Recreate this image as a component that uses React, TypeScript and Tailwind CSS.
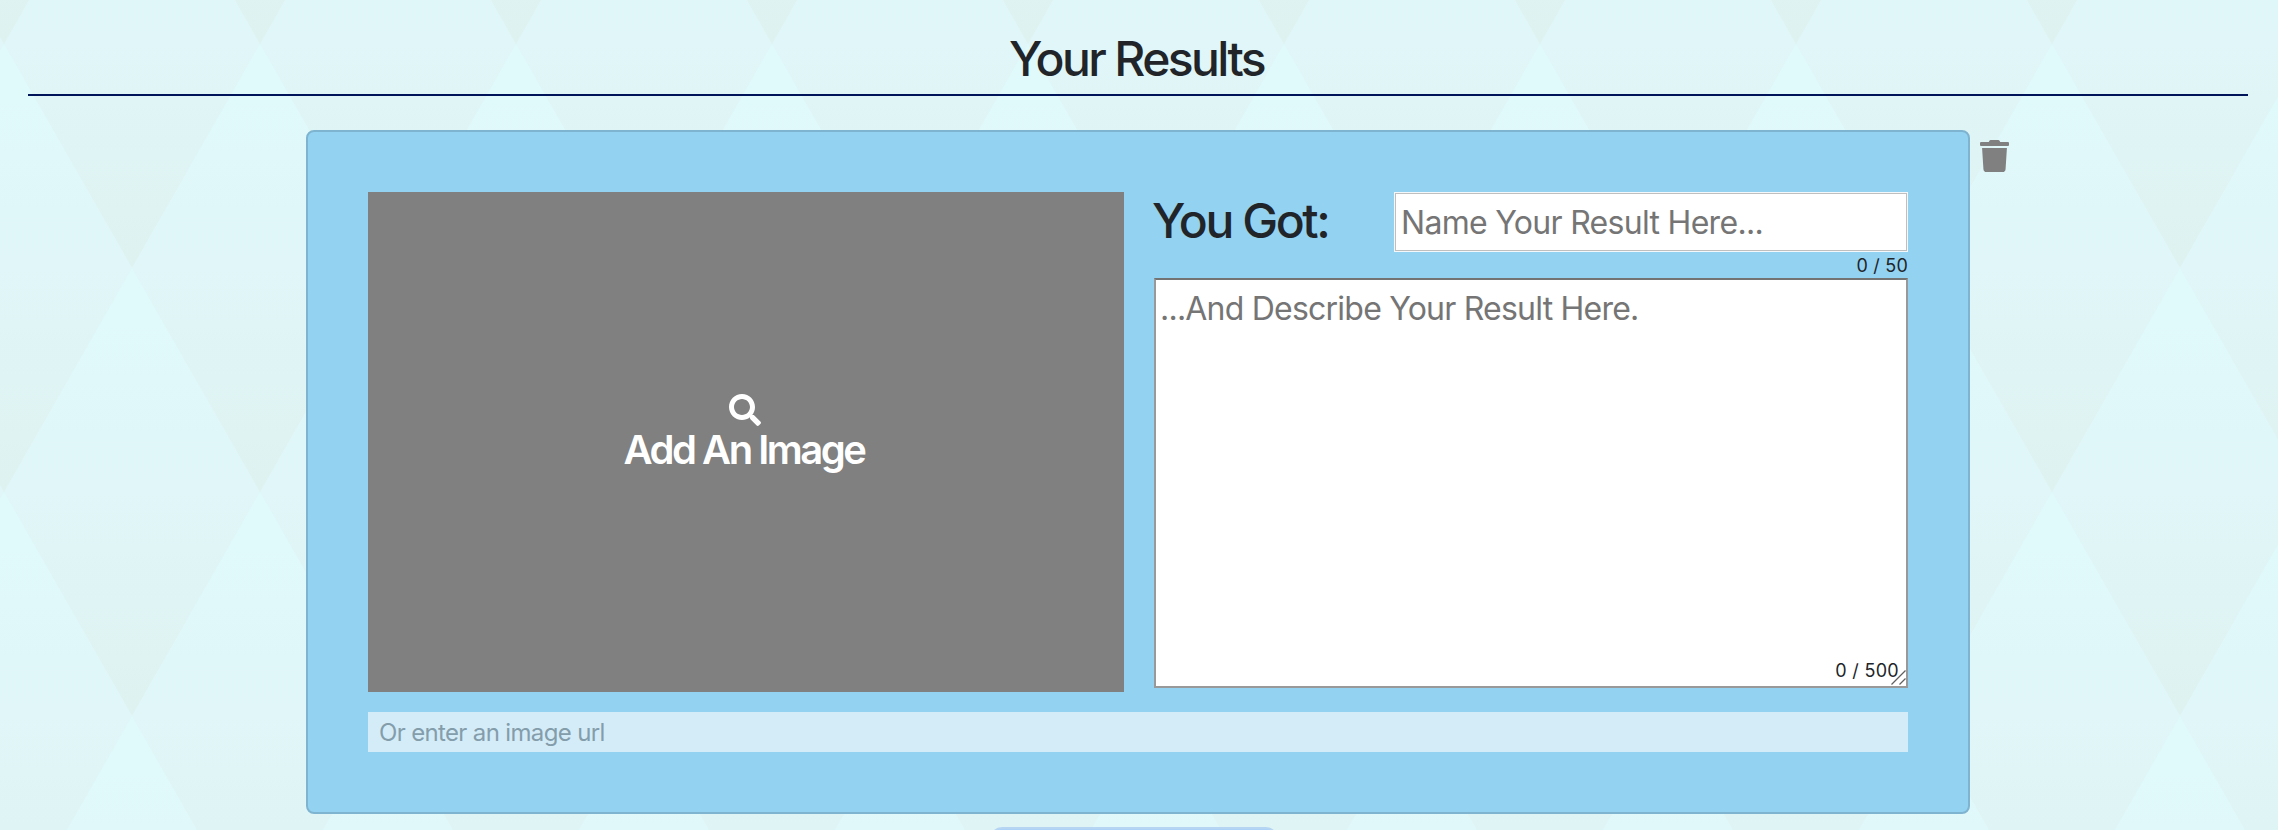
import { FaSearch, FaTrash } from "react-icons/fa";

function Backdrop() {
  return (
    <svg className="absolute inset-0 h-full w-full" aria-hidden="true">
      <defs>
        <linearGradient id="shade" x1="0" y1="0" x2="0" y2="1">
          <stop offset="0" stopColor="#e0fafc" />
          <stop offset="0.5" stopColor="#e0f6f8" />
          <stop offset="1" stopColor="#def2f0" />
        </linearGradient>
        <pattern id="diamonds" x="4" y="44" width="256" height="448" patternUnits="userSpaceOnUse">
          <rect width="256" height="448" fill="#e0f6f8" />
          <path d="M128 -224L256 0L128 224L0 0Z" fill="url(#shade)" />
          <path d="M128 224L256 448L128 672L0 448Z" fill="url(#shade)" />
          <path d="M0 0L128 224L0 448L-128 224Z" fill="url(#shade)" />
          <path d="M256 0L384 224L256 448L128 224Z" fill="url(#shade)" />
        </pattern>
      </defs>
      <rect width="100%" height="100%" fill="url(#diamonds)" />
    </svg>
  );
}

export default function App() {
  return (
    <div className="relative h-[830px] w-full overflow-hidden bg-[#e0f6f8] font-[Inter,sans-serif] text-[#212529]">
      <Backdrop />
      <main className="relative pr-[30px] pl-7">
        <header className="flex h-24 items-start justify-center border-b-2 border-[#00145a] pt-[30px]">
          <h1 className="pr-[3px] text-[48px] leading-[58px] font-medium tracking-[-2.6px] whitespace-nowrap">Your Results</h1>
        </header>

        <div className="mt-[34px] ml-[278px] flex items-start">
          <section className="h-[684px] w-[1664px] shrink-0 rounded-lg border-2 border-[#7fb4d0] bg-[#93d2f1] p-[60px]">
            <div className="flex gap-[30px]">
              <button className="flex h-[500px] w-[756px] flex-col items-center bg-[#808080] pt-[202px] pr-[2px] text-white">
                <FaSearch className="size-8" />
                <span className="pr-[2px] text-[40px] leading-[48px] font-semibold tracking-[-2.5px] whitespace-nowrap">Add An Image</span>
              </button>
              <div className="flex w-[754px] flex-col">
                <div className="flex h-[60px] justify-between">
                  <h2 className="-ml-0.5 text-[48px] leading-[58px] font-medium tracking-[-2.4px] whitespace-nowrap">You Got:</h2>
                  <div className="w-[514px] border border-[#f4f8fa] bg-white">
                    <div className="flex h-full items-center border border-[#bfbfbf] pt-0.5 pl-[5px]">
                      <input
                        className="w-full text-[32px] leading-10 tracking-[-0.7px] outline-none placeholder:text-[#757575]"
                        placeholder="Name Your Result Here..."
                      />
                    </div>
                  </div>
                </div>
                <div className="flex h-[26px] items-center justify-end pt-0.5 text-[18px] leading-[26px] tracking-[0.2px]">
                  <span>0 / 50</span>
                </div>
                <div className="relative h-[410px]">
                  <textarea
                    className="block h-full w-full resize-none border-2 border-[#999999] border-t-[#737373] bg-white px-1 pt-[9px] text-[32px] leading-10 tracking-[-0.78px] outline-none placeholder:text-[#757575]"
                    placeholder="...And Describe Your Result Here."
                  />
                  <span className="absolute right-[9px] bottom-1 text-[18px] leading-[26px] tracking-[0.3px]">0 / 500</span>
                  <svg className="absolute right-[2px] bottom-[3px] h-[15px] w-[15px]" viewBox="0 0 15 15" fill="none" stroke="#606060" strokeWidth="1.3">
                    <path d="M0.5 14.5L14.5 0.5M8.5 14.5L14.5 8.5" />
                  </svg>
                </div>
              </div>
            </div>
            <input
              className="mt-5 block h-10 w-full bg-[#d4ecf8] px-[11px] text-[24px] tracking-[-0.65px] outline-none placeholder:text-[#849dab]"
              placeholder="Or enter an image url"
            />
          </section>
          <FaTrash className="mt-[10px] ml-[10px] h-8 w-[29px] text-[#808080]" preserveAspectRatio="none" />
        </div>

        <div className="mt-[13px] ml-[962px] h-12 w-[288px] rounded-xl border-2 border-[#b6d5f2] bg-[#add2f8]" />
      </main>
    </div>
  );
}
